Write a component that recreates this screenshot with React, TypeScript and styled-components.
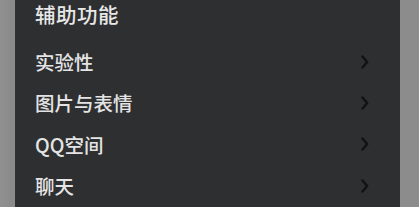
import styled, { createGlobalStyle } from "styled-components";

const items = ["实验性", "图片与表情", "QQ空间", "聊天"];

export default function App() {
  return (
    <>
      <GlobalStyle />
      <Page>
        <Panel>
          <Header>辅助功能</Header>
          <List>
            {items.map((label) => (
              <Row key={label}>
                <Label>{label}</Label>
                <Chevron viewBox="0 0 8 14">
                  <path d="M1.5 1.5 L6.2 7 L1.5 12.5" />
                </Chevron>
              </Row>
            ))}
          </List>
        </Panel>
      </Page>
    </>
  );
}

const GlobalStyle = createGlobalStyle`
  html, body {
    margin: 0;
    padding: 0;
    background: #8c8c8c;
    font-family: "Noto Sans CJK SC", "Liberation Sans", sans-serif;
  }
`;

const Page = styled.div`
  display: flex;
  height: 207px;
  overflow: hidden;
  padding-left: 15px;
  background: linear-gradient(90deg, #909090 0, #8a8a8a 13px, #8c8c8c 15px);
`;

const Panel = styled.div`
  width: 385px;
  background: #2e2f31;
  display: flex;
  flex-direction: column;
`;

const Header = styled.div`
  height: 28px;
  display: flex;
  align-items: center;
  padding-left: 20px;
  margin-bottom: 13px;
  font-size: 20.5px;
  letter-spacing: 0.5px;
  font-weight: 500;
  color: #e8e8e8;
`;

const List = styled.div`
  display: flex;
  flex-direction: column;
`;

const Row = styled.div`
  height: 41.3px;
  display: flex;
  align-items: center;
  justify-content: space-between;
  padding: 0 31px 0 20px;
`;

const Label = styled.span`
  font-size: 19.5px;
  font-weight: 500;
  color: #e4e4e4;
`;

const Chevron = styled.svg`
  width: 8px;
  height: 14px;
  fill: none;
  stroke: #121212;
  stroke-width: 2.4;
  stroke-linecap: round;
  stroke-linejoin: round;
`;
